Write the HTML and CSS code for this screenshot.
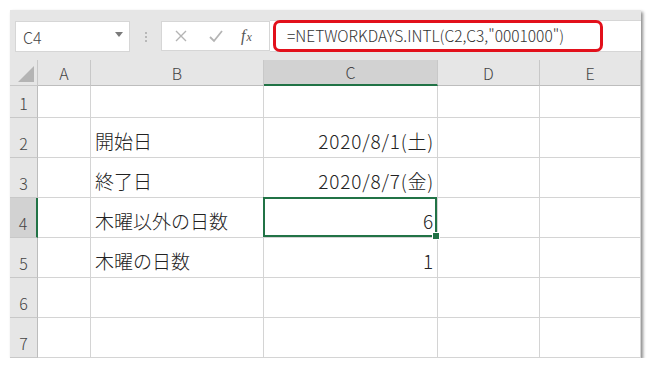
FILE: index.html
```html
<!DOCTYPE html>
<html lang="ja">
<head>
    <meta charset="UTF-8">
    <title>NETWORKDAYS.INTL</title>
    <link rel="stylesheet" href="styles.css">
</head>
<body>
    <div class="window">
        <div class="toolbar">
            <div class="namebox">
                <span>C4</span>
                <svg class="caret" width="8" height="5" viewBox="0 0 8 5"><path d="M0 0h8L4 5z" fill="#7a7a7a"/></svg>
            </div>
            <div class="grip"><i></i><i></i><i></i></div>
            <div class="fxbox">
                <svg width="14" height="14" viewBox="0 0 14 14"><path d="M2 2l10 10M12 2L2 12" stroke="#b4b4b4" stroke-width="1.4" fill="none"/></svg>
                <svg width="16" height="14" viewBox="0 0 16 14"><path d="M2 8l4 4 8-10" stroke="#b4b4b4" stroke-width="1.8" fill="none"/></svg>
                <span class="fx">f<small>x</small></span>
            </div>
            <div class="formula">
                <div class="formula-text">=NETWORKDAYS.INTL(C2,C3,"0001000")</div>
            </div>
        </div>

        <div class="sheet">
            <div class="corner"><span class="tri"></span></div>
            <div class="colhead">A</div>
            <div class="colhead">B</div>
            <div class="colhead active">C</div>
            <div class="colhead">D</div>
            <div class="colhead">E</div>

            <div class="rowhead">1</div>
            <div class="cell"></div><div class="cell"></div><div class="cell"></div><div class="cell"></div><div class="cell"></div>

            <div class="rowhead">2</div>
            <div class="cell"></div><div class="cell">開始日</div><div class="cell num">2020/8/1(土)</div><div class="cell"></div><div class="cell"></div>

            <div class="rowhead">3</div>
            <div class="cell"></div><div class="cell">終了日</div><div class="cell num">2020/8/7(金)</div><div class="cell"></div><div class="cell"></div>

            <div class="rowhead active">4</div>
            <div class="cell"></div><div class="cell">木曜以外の日数</div><div class="cell num selected">6<span class="handle"></span></div><div class="cell"></div><div class="cell"></div>

            <div class="rowhead">5</div>
            <div class="cell"></div><div class="cell">木曜の日数</div><div class="cell num">1</div><div class="cell"></div><div class="cell"></div>

            <div class="rowhead">6</div>
            <div class="cell"></div><div class="cell"></div><div class="cell"></div><div class="cell"></div><div class="cell"></div>

            <div class="rowhead">7</div>
            <div class="cell"></div><div class="cell"></div><div class="cell"></div><div class="cell"></div><div class="cell"></div>
        </div>
    </div>
</body>
</html>
```

FILE: styles.css
```css
body {
    margin: 0;
    background: #fff;
    font-family: "Noto Sans CJK JP", "Noto Sans", sans-serif;
    color: #222;
}
.window {
    margin: 10px 0 0 10px;
    width: 631px;
    background: #e6e6e6;
    box-shadow: 2px 2px 3px rgba(0, 0, 0, 0.45);
}

/* formula bar */
.toolbar {
    height: 50px;
    display: flex;
    align-items: flex-start;
    padding-top: 11px;
    padding-left: 5px;
    box-sizing: border-box;
}
.namebox {
    width: 115px;
    height: 31px;
    box-sizing: border-box;
    background: #fff;
    border: 1px solid #d6d6d6;
    display: flex;
    align-items: center;
    justify-content: space-between;
    padding: 0 6px 0 7px;
    font-size: 16px;
    font-weight: 300;
    color: #444;
}
.caret { margin-top: -4px; }
.grip {
    width: 31px;
    height: 31px;
    display: flex;
    flex-direction: column;
    align-items: center;
    justify-content: center;
    gap: 2px;
}
.grip i {
    width: 2px;
    height: 2px;
    background: #b8b8b8;
}
.fxbox {
    width: 109px;
    height: 30px;
    box-sizing: border-box;
    background: #fff;
    border: 1px solid #d6d6d6;
    display: flex;
    align-items: center;
    padding-left: 12px;
}
.fxbox svg:first-child { margin-right: 20px; }
.fxbox svg:nth-child(2) { margin-right: 17px; }
.fx {
    font-family: "Liberation Serif", serif;
    font-style: italic;
    font-size: 16px;
    color: #555;
}
.fx small {
    font-size: 12px;
    margin-left: 1px;
}
.formula {
    flex: 1;
    height: 32px;
    margin-top: -1px;
    background: #fff;
    border-top: 1px solid #d6d6d6;
    border-bottom: 1px solid #d6d6d6;
    box-sizing: border-box;
    padding-left: 3px;
}
.formula-text {
    width: 330px;
    height: 32px;
    margin-top: -1px;
    box-sizing: border-box;
    border: 3px solid #e2101b;
    border-radius: 7px;
    padding-left: 11px;
    font-size: 15.5px;
    font-weight: 300;
    line-height: 25px;
    color: #333;
    white-space: nowrap;
}

/* grid */
.sheet {
    display: grid;
    grid-template-columns: 28px 53px 173px 174px 102px 101px;
    grid-template-rows: 26px 32px repeat(6, 40px);
    background: #fff;
}
.corner {
    background: #e6e6e6;
    border-right: 1px solid #c8c8c8;
    border-bottom: 1px solid #c8c8c8;
    position: relative;
}
.tri {
    position: absolute;
    right: 3px;
    bottom: 3px;
    width: 0;
    height: 0;
    border-left: 16px solid transparent;
    border-bottom: 16px solid #b4b4b4;
}
.colhead {
    background: #e6e6e6;
    border-right: 1px solid #c8c8c8;
    border-bottom: 1px solid #bdbdbd;
    display: flex;
    align-items: center;
    justify-content: center;
    font-size: 16px;
    font-weight: 300;
    color: #444;
}
.colhead.active {
    background: #d2d2d2;
    border-bottom: 2px solid #217346;
}
.rowhead {
    background: #e6e6e6;
    border-right: 1px solid #bdbdbd;
    border-bottom: 1px solid #c8c8c8;
    display: flex;
    align-items: flex-end;
    justify-content: center;
    padding-bottom: 2px;
    font-size: 16px;
    font-weight: 300;
    color: #444;
}
.rowhead.active {
    background: #d2d2d2;
    border-right: 2px solid #217346;
}
.cell {
    border-right: 1px solid #d4d4d4;
    border-bottom: 1px solid #d4d4d4;
    display: flex;
    align-items: flex-end;
    padding: 0 4px 3px 4px;
    font-size: 19px;
    font-weight: 300;
    color: #222;
    white-space: nowrap;
}
.cell.num {
    justify-content: flex-end;
    letter-spacing: 0.8px;
    padding-right: 3px;
}
.cell.selected {
    position: relative;
    box-shadow: inset 0 0 0 2px #217346;
    margin: -1px 0 0 -1px;
}
.handle {
    position: absolute;
    right: -3px;
    bottom: -3px;
    width: 6px;
    height: 6px;
    background: #217346;
    border: 1px solid #fff;
}
```
